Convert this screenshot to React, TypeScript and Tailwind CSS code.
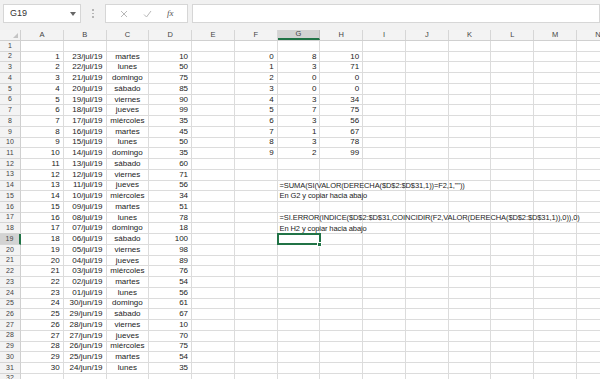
import React from 'react';

const COLS = ['A', 'B', 'C', 'D', 'E', 'F', 'G', 'H', 'I', 'J', 'K', 'L', 'M', 'N'];
const DAYS = ['martes', 'lunes', 'domingo', 'sábado', 'viernes', 'jueves', 'miércoles'];
const D = [10, 50, 75, 85, 90, 99, 35, 45, 50, 35, 60, 71, 56, 34, 51, 78, 18, 100, 98, 89, 76, 54, 56, 61, 67, 10, 70, 75, 54, 35];
const G = [8, 3, 0, 0, 3, 7, 3, 1, 3, 2];
const H = [10, 71, 0, 0, 34, 75, 56, 67, 78, 99];

function dateLabel(i: number) {
  // row i = 0 -> 23/jul/19, counting back one day each row
  const day = 23 - i;
  if (day >= 1) return `${String(day).padStart(2, '0')}/jul/19`;
  return `${30 + day}/jun/19`;
}

type Cell = { text: string; align: 'left' | 'right' | 'center' };

function cellsFor(row: number): Record<string, Cell> {
  const out: Record<string, Cell> = {};
  const i = row - 2;
  if (i >= 0 && i < 30) {
    out.A = { text: String(i + 1), align: 'right' };
    out.B = { text: dateLabel(i), align: 'right' };
    out.C = { text: DAYS[i % 7], align: 'center' };
    out.D = { text: String(D[i]), align: 'right' };
  }
  if (i >= 0 && i < 10) {
    out.F = { text: String(i), align: 'right' };
    out.G = { text: String(G[i]), align: 'right' };
    out.H = { text: String(H[i]), align: 'right' };
  }
  if (row === 14) out.G = { text: '=SUMA(SI(VALOR(DERECHA($D$2:$D$31,1))=F2,1,""))', align: 'left' };
  if (row === 15) out.G = { text: 'En G2 y copiar hacia abajo', align: 'left' };
  if (row === 17) out.G = { text: '=SI.ERROR(INDICE($D$2:$D$31,COINCIDIR(F2,VALOR(DERECHA($D$2:$D$31,1)),0)),0)', align: 'left' };
  if (row === 18) out.G = { text: 'En H2 y copiar hacia abajo', align: 'left' };
  return out;
}

const ROWS = Array.from({ length: 32 }, (_, k) => k + 1);

export default function App() {
  return (
    <div
      className="w-[600px] h-[379px] overflow-hidden bg-white text-[#222]"
      style={{ fontFamily: '"Liberation Sans", Arial, sans-serif' }}
    >
      {/* Formula bar */}
      <div className="h-[30px] bg-[#f1f1f1] flex items-start pt-[4px] pl-[3px] gap-0">
        <div className="w-[78px] h-[19px] bg-white border border-[#d6d6d6] flex items-center justify-between pl-[6px] pr-[4px]">
          <span className="text-[9px] text-[#333]">G19</span>
          <svg width="6" height="4" viewBox="0 0 6 4"><path d="M0 0h6L3 4z" fill="#666" /></svg>
        </div>
        <div className="w-[24px] h-[19px] flex flex-col items-center justify-center gap-[2px]">
          <span className="w-[1.5px] h-[1.5px] bg-[#b5b5b5]" />
          <span className="w-[1.5px] h-[1.5px] bg-[#b5b5b5]" />
          <span className="w-[1.5px] h-[1.5px] bg-[#b5b5b5]" />
        </div>
        <div className="w-[83px] h-[19px] bg-white border border-[#d6d6d6] flex items-center justify-around px-[6px]">
          <svg width="8" height="8" viewBox="0 0 8 8"><path d="M1 1l6 6M7 1L1 7" stroke="#b8b8b8" strokeWidth="1" /></svg>
          <svg width="9" height="8" viewBox="0 0 9 8"><path d="M1 4.5l2.5 2.5L8 1" stroke="#b8b8b8" strokeWidth="1" fill="none" /></svg>
          <span className="text-[9px] italic text-[#555]" style={{ fontFamily: '"Liberation Serif", serif' }}>fx</span>
        </div>
        <div className="ml-[4px] flex-1 h-[19px] bg-white border border-[#d6d6d6]" />
      </div>

      {/* Column headers */}
      <div className="flex h-[11px] bg-[#f3f3f3] border-b border-[#d0d0d0]">
        <div className="w-[21px] shrink-0 border-r border-[#d0d0d0] relative">
          <svg className="absolute right-[2px] bottom-[2px]" width="5" height="5" viewBox="0 0 5 5"><path d="M5 0v5H0z" fill="#c4c4c4" /></svg>
        </div>
        {COLS.map((c) => (
          <div
            key={c}
            className={`w-[42.77px] shrink-0 flex items-center justify-center text-[7.5px] text-[#444] border-r ${
              c === 'G' ? 'bg-[#d3d3d3] border-[#bdbdbd] border-b-2 border-b-[#217346]' : 'border-[#d6d6d6]'
            }`}
          >
            {c}
          </div>
        ))}
      </div>

      {/* Grid */}
      <div className="relative">
        {ROWS.map((r) => {
          const cells = cellsFor(r);
          const sel = r === 19;
          return (
            <div key={r} className="flex h-[10.74px]">
              <div
                className={`w-[21px] shrink-0 flex items-center justify-center text-[7px] text-[#444] border-b border-[#d6d6d6] ${
                  sel ? 'bg-[#d3d3d3] border-r-2 border-r-[#217346]' : 'bg-[#f3f3f3] border-r border-r-[#d0d0d0]'
                }`}
              >
                {r}
              </div>
              {COLS.map((c) => {
                const cell = cells[c];
                return (
                  <div
                    key={c}
                    className="w-[42.77px] shrink-0 border-r border-b border-[#dcdcdc] flex items-center relative"
                  >
                    {cell && cell.align === 'right' && (
                      <span className="w-full text-right pr-[3px] text-[8px] leading-none">{cell.text}</span>
                    )}
                    {cell && cell.align === 'center' && (
                      <span className="w-full text-center text-[8px] leading-none">{cell.text}</span>
                    )}
                    {cell && cell.align === 'left' && (
                      <span className="absolute left-[2px] top-0 h-full flex items-center whitespace-nowrap text-[7.5px] leading-none z-10 tracking-[-0.1px]">
                        {cell.text}
                      </span>
                    )}
                  </div>
                );
              })}
            </div>
          );
        })}
        {/* Selected cell G19 */}
        <div className="absolute left-[276.6px] top-[192.3px] w-[44.3px] h-[12px] border-2 border-[#217346] z-20">
          <div className="absolute -right-[3.5px] -bottom-[3.5px] w-[5px] h-[5px] bg-[#217346] border border-white" />
        </div>
      </div>
    </div>
  );
}
